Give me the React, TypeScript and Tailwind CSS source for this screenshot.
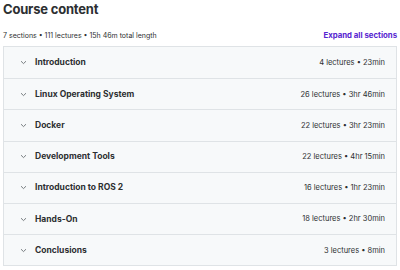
import React from "react";

const sections = [
  { title: "Introduction", meta: "4 lectures • 23min" },
  { title: "Linux Operating System", meta: "26 lectures • 3hr 46min" },
  { title: "Docker", meta: "22 lectures • 3hr 23min" },
  { title: "Development Tools", meta: "22 lectures • 4hr 15min" },
  { title: "Introduction to ROS 2", meta: "16 lectures • 1hr 23min" },
  { title: "Hands-On", meta: "18 lectures • 2hr 30min" },
  { title: "Conclusions", meta: "3 lectures • 8min" },
];

function Chevron() {
  return (
    <svg width="7" height="5" viewBox="0 0 7 5" className="shrink-0">
      <path d="M1 1.2 L3.5 3.6 L6 1.2" fill="none" stroke="#6a6f73" strokeWidth="0.9" />
    </svg>
  );
}

export default function App() {
  return (
    <div className="w-[400px] h-[270px] bg-white overflow-hidden font-['Inter',sans-serif] text-[#2d2f31]">
      <div className="px-[3px]">
        <h2 className="text-[13px] leading-[16px] font-bold tracking-[-0.2px] pt-[1px] pl-[0px]">Course content</h2>
        <div className="flex items-center justify-between mt-[13px] h-[12px]">
          <span className="text-[7px] text-[#2d2f31] pl-[0px]">7 sections • 111 lectures • 15h 46m total length</span>
          <span className="text-[7.8px] font-bold text-[#5624d0] pr-[0px]">Expand all sections</span>
        </div>
        <div className="mt-[4px] border border-[#dfe3e6]">
          {sections.map((s, i) => (
            <div
              key={s.title}
              className={`flex items-center h-[31.2px] bg-[#f7f9fa] pl-[16px] pr-[11px] ${i > 0 ? "border-t border-[#dfe3e6]" : ""}`}
            >
              <Chevron />
              <span className="ml-[8px] text-[8.5px] font-bold text-[#2d2f31]">{s.title}</span>
              <span className="ml-auto text-[7.5px] text-[#2d2f31]">{s.meta}</span>
            </div>
          ))}
        </div>
      </div>
    </div>
  );
}
